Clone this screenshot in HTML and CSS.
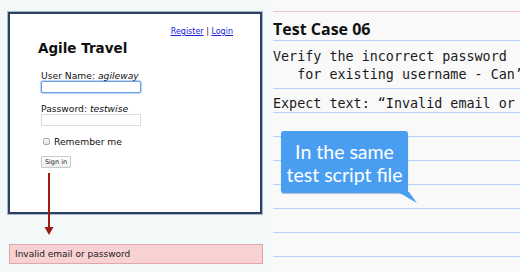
FILE: index.html
```html
<!DOCTYPE html>
<html>
<head>
<meta charset="utf-8">
<link rel="stylesheet" href="styles.css">
</head>
<body>
<div class="page">
  <section class="left">
    <div class="panel">
      <div class="links"><a href="#">Register</a> | <a href="#">Login</a></div>
      <h1 class="title">Agile Travel</h1>
      <div class="form">
        <div class="label">User Name: <i>agileway</i></div>
        <div class="input focus"></div>
        <div class="label gap">Password: <i>testwise</i></div>
        <div class="input"></div>
        <div class="check-row"><span class="checkbox"></span><span>Remember me</span></div>
        <div class="button">Sign in</div>
      </div>
    </div>
    <div class="error">Invalid email or password</div>
    <svg class="arrow" width="10" height="64" viewBox="0 0 10 64">
      <line x1="5" y1="0" x2="5" y2="56" stroke="#9e1b12" stroke-width="2"/>
      <polygon points="0.5,54 9.5,54 5,62" fill="#9e1b12"/>
    </svg>
  </section>
  <section class="right">
    <div class="row red"></div>
    <div class="row head">Test Case 06</div>
    <div class="row mono tall">Verify the incorrect password
   for existing username - Can’t login</div>
    <div class="row mono expect">Expect text: “Invalid email or password”</div>
    <div class="row"></div>
    <div class="row"></div>
    <div class="row"></div>
    <div class="row"></div>
    <div class="row"></div>
    <div class="row"></div>
    <div class="row"></div>
    <div class="callout">In the same<br>test script file
      <svg class="tail" width="20" height="12" viewBox="0 0 20 12"><polygon points="0,0 11,0 19,11" fill="#4a9ef2"/></svg>
    </div>
  </section>
</div>
</body>
</html>
```

FILE: styles.css
```css
html, body {
  margin: 0;
  padding: 0;
}
body {
  width: 520px;
  height: 272px;
  overflow: hidden;
  font-family: "DejaVu Sans", Verdana, sans-serif;
}
.page {
  display: flex;
  width: 520px;
  height: 272px;
}
.left {
  position: relative;
  width: 272px;
  flex: none;
  background: #f3f8f9;
  padding: 12px 0 0 8px;
  box-sizing: border-box;
}
.panel {
  width: 254px;
  height: 202px;
  box-sizing: border-box;
  background: #ffffff;
  border: 2px solid #2c4263;
  box-shadow: 0 0 0 1px #a9b7c7;
  padding-top: 13px;
}
.links {
  font-size: 8px;
  line-height: 10px;
  height: 10px;
  text-align: right;
  padding-right: 27px;
  color: #222;
}
.links a {
  color: #2020d8;
  text-decoration: underline;
}
.title {
  margin: 3px 0 0 28px;
  font-size: 13.5px;
  line-height: 16px;
  font-weight: bold;
  color: #111;
}
.form {
  margin-left: 31px;
  padding-top: 14px;
  font-size: 9.2px;
  color: #111;
}
.label {
  line-height: 11px;
  height: 11px;
}
.label.gap {
  margin-top: 10px;
}
.input {
  width: 100px;
  height: 12px;
  box-sizing: border-box;
  border: 1px solid #dcdcdc;
  background: #fff;
}
.input.focus {
  border: 1.5px solid #6c9ee6;
  border-radius: 2px;
  box-shadow: 0 0 1px 1px #b9d2f4;
}
.check-row {
  display: flex;
  align-items: center;
  gap: 4px;
  margin-top: 10px;
  height: 11px;
  line-height: 11px;
  padding-left: 2px;
}
.checkbox {
  width: 7px;
  height: 7px;
  box-sizing: border-box;
  border: 1px solid #a9a9a9;
  border-radius: 2px;
  background: linear-gradient(#ffffff, #e2e2e2);
}
.button {
  margin-top: 9px;
  width: 30px;
  height: 12px;
  box-sizing: border-box;
  border: 1px solid #c9c9c9;
  border-radius: 1px;
  background: linear-gradient(#ffffff, #f0f0f0);
  font-size: 6.5px;
  line-height: 10px;
  text-align: center;
  color: #222;
}
.error {
  margin: 30px 0 0 1px;
  width: 254px;
  height: 20px;
  box-sizing: border-box;
  background: #f8d1d3;
  border: 1px solid #e2a7ab;
  font-size: 9px;
  line-height: 18px;
  padding-left: 5px;
  color: #1a1a1a;
}
.arrow {
  position: absolute;
  left: 44px;
  top: 173px;
}
.right {
  position: relative;
  flex: 1;
  background: #f9f9f9;
  padding-left: 1px;
  overflow: hidden;
}
.row {
  height: 24px;
  box-sizing: border-box;
  border-bottom: 1px solid #b3d2f6;
  white-space: pre;
  overflow: hidden;
}
.row.red {
  height: 12px;
  border-bottom-color: #f3c5c5;
}
.row.head {
  height: 29px;
  padding-top: 8px;
  line-height: 18px;
  font-family: "Open Sans", "DejaVu Sans", sans-serif;
  font-weight: 700;
  font-size: 16px;
  color: #111;
}
.mono {
  font-family: "DejaVu Sans Mono", "Liberation Mono", monospace;
  font-size: 13.4px;
  line-height: 18px;
  color: #1a1a1a;
}
.row.tall {
  height: 48px;
  padding-top: 7px;
}
.row.expect {
  padding-top: 6px;
}
.callout {
  position: absolute;
  left: 9px;
  top: 131px;
  width: 127px;
  height: 62px;
  box-sizing: border-box;
  background: #4a9ef2;
  border-radius: 3px;
  box-shadow: 0 1px 1px rgba(40, 80, 140, 0.35);
  color: #ffffff;
  font-family: "Lato", "Open Sans", sans-serif;
  font-size: 19.5px;
  line-height: 23px;
  text-align: center;
  padding-top: 9px;
}
.tail {
  position: absolute;
  left: 117px;
  top: 61px;
}
```
